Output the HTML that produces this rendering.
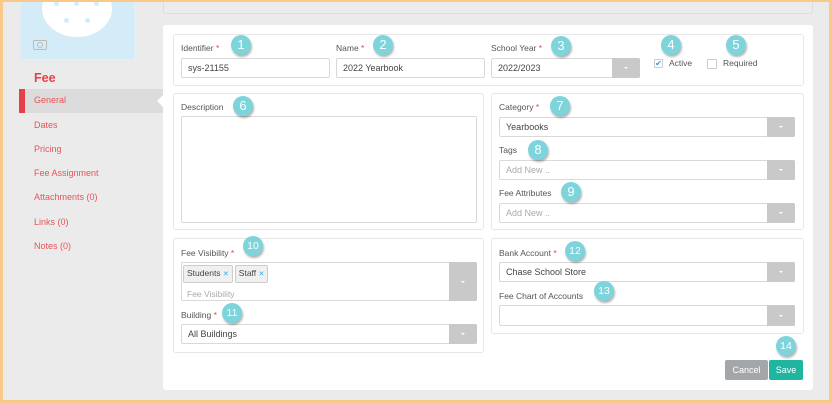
<!DOCTYPE html>
<html><head><meta charset="utf-8"><style>
*{box-sizing:border-box;margin:0;padding:0}
body{width:832px;height:403px;overflow:hidden;background:#ebebeb;font-family:"Liberation Sans",sans-serif;font-size:9px;color:#555;position:relative}
.frame{position:absolute;left:0;top:0;width:832px;height:403px;border:3px solid #f9c98a;border-top-width:2px;z-index:50;pointer-events:none}
.a{position:absolute}
.panel{position:absolute;background:#fff;border:1px solid #e6e6e6;border-radius:3px}
.lbl{position:absolute;font-size:8.5px;color:#555}
.lbl i{color:#e04848;font-style:normal}
.in{position:absolute;background:#fff;border:1px solid #d9d9d9;border-radius:2px;font-size:9px;color:#444;padding:0 0 0 6px;line-height:18px}
.ph{color:#aaa}
.btn{position:absolute;top:-1px;right:-1px;bottom:-1px;width:28px;background:#c9c9c9;border-radius:0 2px 2px 0}
.btn:after{content:"";position:absolute;left:12px;top:50%;margin-top:-1px;border-left:2px solid transparent;border-right:2px solid transparent;border-top:2px solid #fff}
.b{position:absolute;width:20px;height:20px;border-radius:50%;background:#7dd4da;color:#fff;font-size:13px;text-align:center;line-height:20px;box-shadow:1px 2px 2px rgba(0,0,0,.3);margin:-10px 0 0 -10px}
.b.s{font-size:10.5px}
.nav{position:absolute;left:34px;color:#e8545a;font-size:9px}
.tag{display:inline-block;border:1px solid #ccc;background:#f0f0f0;border-radius:2px;padding:0 3px;line-height:14px;font-size:8.5px;color:#444;margin-right:2px}
.tag b{color:#3aa8d8;font-weight:normal;font-size:7px}
.dot{position:absolute;width:5px;height:5px;background:#d4ecf8;border-radius:50%}
</style></head><body>
<div class="frame"></div>
<div class="a" style="left:20px;top:0;width:115px;height:60px;background:#d4ecf8;border:1px solid #e0eef5"></div>
<div class="a" style="left:42px;top:-20px;width:70px;height:57px;background:#fff;border-radius:50%"></div>
<div class="dot" style="left:54px;top:1px"></div>
<div class="dot" style="left:74px;top:1px"></div>
<div class="dot" style="left:94px;top:1px"></div>
<div class="dot" style="left:64px;top:18px"></div>
<div class="dot" style="left:85px;top:18px"></div>
<div class="a" style="left:33px;top:40px;width:14px;height:10px;border:1px solid #bbb;border-radius:2px"></div>
<div class="a" style="left:37px;top:42px;width:6px;height:6px;border:1px solid #bbb;border-radius:50%"></div>
<div class="a" style="left:34px;top:71px;color:#e8404a;font-size:12.5px;font-weight:bold">Fee</div>
<div class="a" style="left:19px;top:89px;width:144px;height:24px;background:#dcdcdc"></div>
<div class="a" style="left:19px;top:89px;width:6px;height:24px;background:#e8404a"></div>
<div class="a" style="left:157px;top:94px;width:0;height:0;border-top:7px solid transparent;border-bottom:7px solid transparent;border-right:7px solid #fff"></div>
<div class="nav" style="top:95px">General</div>
<div class="nav" style="top:120px">Dates</div>
<div class="nav" style="top:144px">Pricing</div>
<div class="nav" style="top:168px">Fee Assignment</div>
<div class="nav" style="top:192px">Attachments (0)</div>
<div class="nav" style="top:217px">Links (0)</div>
<div class="nav" style="top:241px">Notes (0)</div>
<div class="a" style="left:163px;top:-2px;width:650px;height:16px;background:#ececec;border:1px solid #ddd;border-radius:3px"></div>
<div class="a" style="left:163px;top:25px;width:650px;height:365px;background:#fff;border-radius:3px"></div>
<div class="panel" style="left:173px;top:34px;width:631px;height:52px"></div>
<div class="lbl" style="left:181px;top:43px">Identifier <i>*</i></div>
<div class="in" style="left:181px;top:58px;width:149px;height:20px">sys-21155</div>
<div class="lbl" style="left:336px;top:43px">Name <i>*</i></div>
<div class="in" style="left:336px;top:58px;width:149px;height:20px">2022 Yearbook</div>
<div class="lbl" style="left:491px;top:43px">School Year <i>*</i></div>
<div class="in" style="left:491px;top:58px;width:149px;height:20px">2022/2023<div class="btn"></div></div>
<div class="a" style="left:654px;top:59px;width:9px;height:9px;border:1px solid #ccc;border-radius:1px;color:#2a9fd8;font-size:8px;line-height:7px;text-align:center">✔</div>
<div class="lbl" style="left:669px;top:58px">Active</div>
<div class="a" style="left:707px;top:59px;width:10px;height:10px;border:1px solid #ccc;border-radius:1px"></div>
<div class="lbl" style="left:723px;top:58px">Required</div>
<div class="panel" style="left:173px;top:93px;width:311px;height:137px"></div>
<div class="lbl" style="left:181px;top:102px">Description</div>
<div class="in" style="left:181px;top:116px;width:296px;height:107px"></div>
<div class="panel" style="left:491px;top:93px;width:313px;height:137px"></div>
<div class="lbl" style="left:499px;top:102px">Category <i>*</i></div>
<div class="in" style="left:499px;top:117px;width:296px;height:20px">Yearbooks<div class="btn"></div></div>
<div class="lbl" style="left:499px;top:145px">Tags</div>
<div class="in ph" style="left:499px;top:160px;width:296px;height:20px">Add New ..<div class="btn"></div></div>
<div class="lbl" style="left:499px;top:188px">Fee Attributes</div>
<div class="in ph" style="left:499px;top:203px;width:296px;height:20px">Add New ..<div class="btn"></div></div>
<div class="panel" style="left:173px;top:238px;width:311px;height:115px"></div>
<div class="lbl" style="left:181px;top:248px">Fee Visibility <i>*</i></div>
<div class="in" style="left:181px;top:262px;width:296px;height:39px;padding:2px 0 0 1px;line-height:14px"><span class="tag">Students <b>✕</b></span><span class="tag">Staff <b>✕</b></span><div class="ph" style="padding-left:4px;margin-top:4px;font-size:8.5px">Fee Visibility</div><div class="btn"></div></div>
<div class="lbl" style="left:181px;top:310px">Building <i>*</i></div>
<div class="in" style="left:181px;top:324px;width:296px;height:20px">All Buildings<div class="btn"></div></div>
<div class="panel" style="left:491px;top:238px;width:313px;height:96px"></div>
<div class="lbl" style="left:499px;top:248px">Bank Account <i>*</i></div>
<div class="in" style="left:499px;top:262px;width:296px;height:20px">Chase School Store<div class="btn"></div></div>
<div class="lbl" style="left:499px;top:291px">Fee Chart of Accounts</div>
<div class="in" style="left:499px;top:305px;width:296px;height:21px"><div class="btn"></div></div>
<div class="a" style="left:725px;top:360px;width:43px;height:20px;background:#a3a7aa;color:#fff;text-align:center;line-height:20px;border-radius:2px;font-size:9px">Cancel</div>
<div class="a" style="left:769px;top:360px;width:34px;height:20px;background:#1fb5a0;color:#fff;text-align:center;line-height:20px;border-radius:2px;font-size:9px">Save</div>
<div class="b" style="left:241px;top:45px">1</div>
<div class="b" style="left:383px;top:45px">2</div>
<div class="b" style="left:561px;top:46px">3</div>
<div class="b" style="left:671px;top:45px">4</div>
<div class="b" style="left:736px;top:45px">5</div>
<div class="b" style="left:243px;top:106px">6</div>
<div class="b" style="left:560px;top:106px">7</div>
<div class="b" style="left:538px;top:150px">8</div>
<div class="b" style="left:571px;top:192px">9</div>
<div class="b s" style="left:253px;top:246px">10</div>
<div class="b s" style="left:232px;top:313px">11</div>
<div class="b s" style="left:575px;top:251px">12</div>
<div class="b s" style="left:604px;top:291px">13</div>
<div class="b s" style="left:786px;top:346px">14</div>
</body></html>
